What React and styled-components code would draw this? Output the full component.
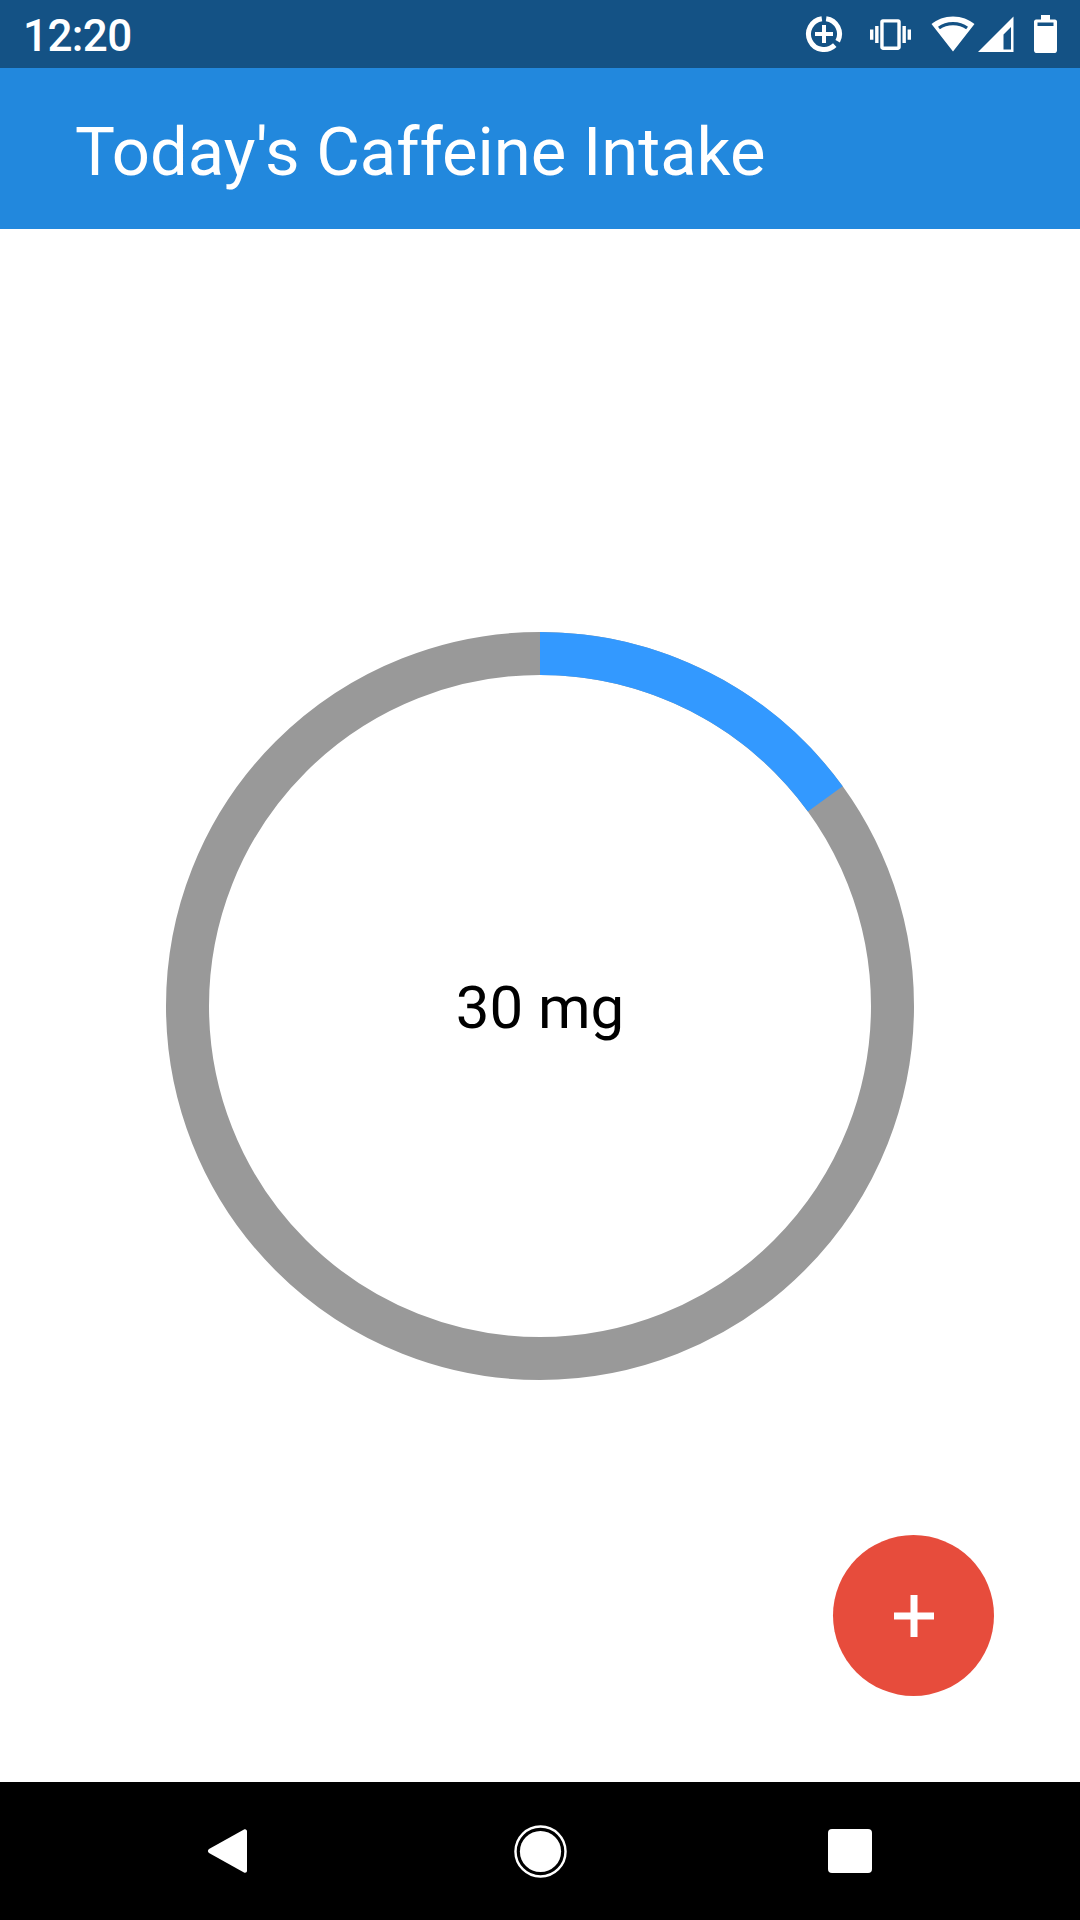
import React from "react";
import styled, { createGlobalStyle } from "styled-components";

const Global = createGlobalStyle`
  html, body { margin: 0; padding: 0; background: #fff; }
  #root { width: 1080px; height: 1920px; }
`;

const Screen = styled.div`
  width: 1080px;
  height: 1920px;
  display: flex;
  flex-direction: column;
  font-family: Roboto, "Liberation Sans", sans-serif;
  overflow: hidden;
`;

const StatusBar = styled.div`
  height: 68px;
  flex: none;
  background: #145285;
  display: flex;
  align-items: center;
  justify-content: space-between;
  padding: 0 23px 0 23px;
  color: #fff;
`;

const Clock = styled.span`
  font-size: 44px;
  line-height: 68px;
  font-weight: 500;
  letter-spacing: -0.6px;
  padding-top: 3px;
`;

const StatusIcons = styled.div`
  display: flex;
  align-items: center;
`;

const StatusIcon = styled.svg`
  display: block;
  flex: none;
  margin-left: ${(p) => p.$gap}px;
`;

const AppBar = styled.header`
  height: 161px;
  flex: none;
  box-sizing: border-box;
  background: #2288dd;
  display: flex;
  align-items: center;
  padding: 6px 0 0 75px;
`;

const Title = styled.h1`
  margin: 0;
  color: #fff;
  font-size: 67px;
  font-weight: 400;
  white-space: nowrap;
`;

const Main = styled.main`
  flex: 1;
  position: relative;
  background: #fff;
  display: flex;
  align-items: center;
  justify-content: center;
`;

const RingWrap = styled.div`
  position: relative;
  width: 748px;
  height: 748px;
`;

const RingSvg = styled.svg`
  display: block;
`;

const RingLabel = styled.div`
  position: absolute;
  inset: 0;
  padding-top: 3px;
  display: flex;
  align-items: center;
  justify-content: center;
  font-size: 60px;
  color: #000;
`;

const Fab = styled.button`
  position: absolute;
  right: 86px;
  bottom: 86px;
  width: 161px;
  height: 161px;
  border: 0;
  padding: 0;
  border-radius: 50%;
  background: #e74c3c;
  display: flex;
  align-items: center;
  justify-content: center;
`;

const NavBar = styled.nav`
  height: 138px;
  flex: none;
  box-sizing: border-box;
  background: #000;
  display: flex;
  align-items: center;
  justify-content: center;
  padding-right: 3px;
`;

const NavIcon = styled.svg`
  display: block;
  flex: none;
  margin-left: ${(p) => p.$gap}px;
`;

const RADIUS = 352.5;
const CIRC = 2 * Math.PI * RADIUS;
const FRACTION = 30 / 200;

function arc(cx, cy, r, a0, a1) {
  const pt = (a) => {
    const t = ((a - 90) * Math.PI) / 180;
    return `${cx + r * Math.cos(t)} ${cy + r * Math.sin(t)}`;
  };
  return `M${pt(a0)} A${r} ${r} 0 ${a1 - a0 > 180 ? 1 : 0} 1 ${pt(a1)}`;
}

export default function App() {
  return (
    <Screen>
      <Global />
      <StatusBar>
        <Clock>12:20</Clock>
        <StatusIcons>
          <StatusIcon width="38" height="38" viewBox="0 0 38 38" $gap={0}>
            <g fill="none" stroke="#fff" strokeWidth="5">
              <path d={arc(19, 19, 15.5, 8, 118)} />
              <path d={arc(19, 19, 15.5, 136, 352)} />
            </g>
            <path d="M17 10h4v7h7v4h-7v7h-4v-7h-7v-4h7z" fill="#fff" />
          </StatusIcon>
          <StatusIcon width="41" height="41" viewBox="0 0 24 24" $gap={27} fill="#fff">
            <path d="M0 15h2V9H0v6zm3 2h2V7H3v10zm19-8v6h2V9h-2zm-3 8h2V7h-2v10zM16.5 3h-9C6.67 3 6 3.67 6 4.5v15c0 .83.67 1.5 1.5 1.5h9c.83 0 1.5-.67 1.5-1.5v-15c0-.83-.67-1.5-1.5-1.5zM16 19H8V5h8v14z" />
          </StatusIcon>
          <StatusIcon width="44" height="36" viewBox="0 0 44 36" $gap={20}>
            <path
              fillRule="evenodd"
              fill="#fff"
              d="M22 0.5C13.5 0.5 6 3.5 0.5 8L22 35.5 43.5 8C38 3.5 30.5 0.5 22 0.5zM22 6c-5.8 0-11 1.8-15 4.7l1.9 2.5C12.5 10.700 17 9.200 22 9.200s9.500 1.500 13.100 4l1.900-2.500C33 7.800 27.800 6 22 6z"
            />
          </StatusIcon>
          <StatusIcon width="36" height="36" viewBox="0 0 36 36" $gap={3}>
            <path
              fillRule="evenodd"
              fill="#fff"
              d="M35.500 0.500V36H0zM33 11L25.500 18.500V33.500H33z"
            />
          </StatusIcon>
          <StatusIcon width="23" height="38" viewBox="0 0 23 38" $gap={20}>
            <path
              fillRule="evenodd"
              fill="#fff"
              d="M7 0h9v4.500h5c1 0 2 1 2 2V35.500c0 1-1 2.500-2 2.500H2c-1 0-2-1.500-2-2.500V6.500c0-1 1-2 2-2h5zM3.500 7.500V11h16V7.500z"
            />
          </StatusIcon>
        </StatusIcons>
      </StatusBar>
      <AppBar>
        <Title>Today's Caffeine Intake</Title>
      </AppBar>
      <Main>
        <RingWrap>
          <RingSvg width="748" height="748" viewBox="0 0 748 748">
            <circle cx="374" cy="374" r={RADIUS} fill="none" stroke="#999999" strokeWidth="43" />
            <circle
              cx="374"
              cy="374"
              r={RADIUS}
              fill="none"
              stroke="#3399ff"
              strokeWidth="43"
              strokeDasharray={`${CIRC * FRACTION} ${CIRC}`}
              transform="rotate(-90 374 374)"
            />
          </RingSvg>
          <RingLabel>30 mg</RingLabel>
        </RingWrap>
        <Fab aria-label="Add">
          <svg width="40" height="42" viewBox="0 0 40 42">
            <path d="M16.500 0h7v17.500H40v7H23.500V42h-7V24.500H0v-7h16.500z" fill="#fff" />
          </svg>
        </Fab>
      </Main>
      <NavBar>
        <NavIcon width="42" height="48" viewBox="0 0 42 48" $gap={0}>
          <path
            d="M38 2.500L3 22c-1.500 1-1.500 3 0 4l35 19.500c1.500.8 3-.2 3-2V4.500c0-1.800-1.500-2.800-3-2z"
            fill="#fff"
          />
        </NavIcon>
        <NavIcon width="53" height="53" viewBox="0 0 54 54" $gap={266}>
          <circle cx="27" cy="27" r="25.500" fill="none" stroke="#fff" strokeWidth="2.500" />
          <circle cx="27" cy="27" r="21" fill="#fff" />
        </NavIcon>
        <NavIcon width="44" height="44" viewBox="0 0 44 44" $gap={261}>
          <rect width="44" height="44" rx="4" fill="#fff" />
        </NavIcon>
      </NavBar>
    </Screen>
  );
}
